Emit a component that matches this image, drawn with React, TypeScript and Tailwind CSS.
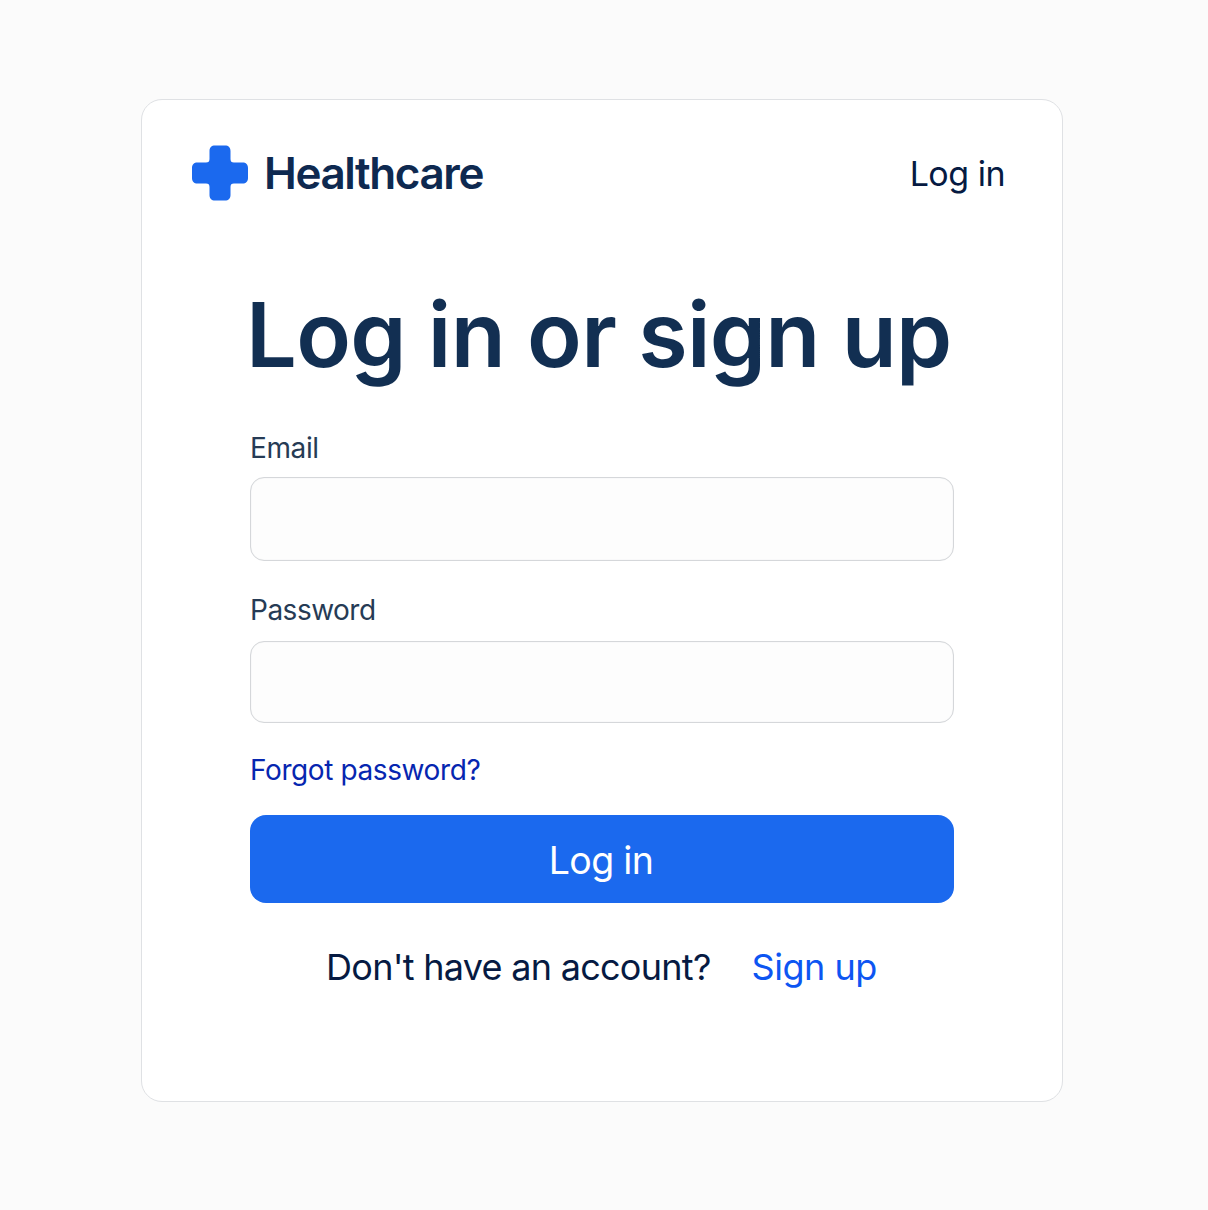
const logo = "M23 0H33C36.500 0 38.500 2 38.500 5.500V13.500C38.500 16 39.500 17 42 17H50.500C54 17 56 19 56 22.500V32.500C56 36 54 38 50.500 38H42C39.500 38 38.500 39 38.500 41.500V49.500C38.500 53 36.500 55 33 55H23C19.500 55 17.500 53 17.500 49.500V41.500C17.500 39 16.500 38 14 38H5.500C2 38 0 36 0 32.500V22.500C0 19 2 17 5.500 17H14C16.500 17 17.500 16 17.500 13.500V5.500C17.500 2 19.500 0 23 0Z";

export default function App() {
  return (
    <div className="h-[1210px] w-[1208px] bg-[#fbfbfb] pl-[141px] pt-[99px] font-['Inter',sans-serif] text-[#061a42]">
      <main className="h-[1003px] w-[922px] rounded-[21px] border border-[#dfe1e4] bg-white">
        <header className="flex h-[146px] items-center justify-between pl-[50px] pr-[57px]">
          <div className="flex items-center gap-[16px]">
            <svg width="56" height="55" viewBox="0 0.5 56 55" fill="#1b69ee" overflow="visible"><path d={logo} /></svg>
            <span className="text-[44px] font-semibold leading-[56px] tracking-[-1.4px] text-[#0e2950]">Healthcare</span>
          </div>
          <a className="pt-[2px] text-[34px] leading-[44px] tracking-[-0.5px]">Log in</a>
        </header>
        <section className="ml-[108px] w-[704px]">
          <h1 className="-ml-[4px] mt-[29px] h-[120px] whitespace-nowrap text-[90px] font-semibold leading-[120px] tracking-[-0.7px] text-[#122f52]">Log in or sign up</h1>
          <label className="mt-[35px] block h-[36px] text-[28px] leading-[36px] tracking-[-0.4px] text-[#263b55]">Email</label>
          <input className="mt-[11px] block h-[84px] w-full rounded-[14px] border border-[#d5d7da] bg-[#fdfdfd] px-5 shadow-[inset_0_0_1px_#d5d7da]" />
          <label className="mt-[31px] block h-[36px] text-[28px] leading-[36px] tracking-[-0.5px] text-[#263b55]">Password</label>
          <input type="password" className="mt-[13px] block h-[82px] w-full rounded-[14px] border border-[#d5d7da] bg-[#fdfdfd] px-5 shadow-[inset_0_0_1px_#d5d7da]" />
          <a className="mt-[29px] block h-[36px] text-[28px] leading-[36px] tracking-[-0.4px] text-[#0626b0]">Forgot password?</a>
          <button className="mt-[27px] block h-[88px] w-full rounded-[16px] bg-[#1b69ee] pr-[2px] pt-[5px] text-[37.5px] tracking-[-0.7px] text-white">Log in</button>
          <p className="mt-[40px] flex gap-[41px] whitespace-nowrap pl-[76px] text-[36px] leading-[48px] tracking-[-0.72px]"><span>Don't have an account?</span><a className="tracking-[-0.5px] text-[#0d55f2]">Sign up</a></p>
        </section>
      </main>
    </div>
  );
}
